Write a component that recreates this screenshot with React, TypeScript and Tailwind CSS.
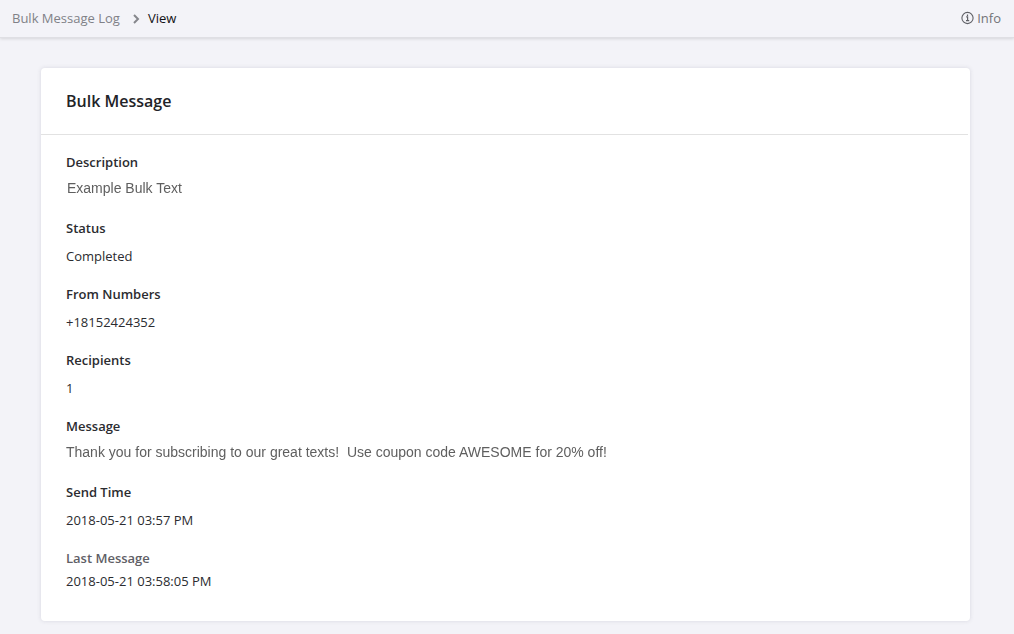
import React from "react";

const openSans = "font-['Open_Sans',sans-serif]";

function Label({ children, muted }: { children: React.ReactNode; muted?: boolean }) {
  return (
    <div className={`text-[13px] leading-[18px] font-semibold ${muted ? "text-[#5f6066]" : "text-[#2b2c30]"}`}>
      {children}
    </div>
  );
}

function Value({ children }: { children: React.ReactNode }) {
  return <div className="mt-[10px] text-[13px] leading-[18px] text-[#2b2c30]">{children}</div>;
}

// these two values are soft in the reference, like pasted-in text
function SoftText({ children, className = "" }: { children: React.ReactNode; className?: string }) {
  return (
    <div
      className={`mt-[8px] font-['Liberation_Sans',sans-serif] text-[14px] leading-[18px] text-[#5f5f5f] whitespace-pre blur-[0.4px] ${className}`}
    >
      {children}
    </div>
  );
}

export default function App() {
  return (
    <div className={`h-[634px] w-[1014px] overflow-hidden bg-[#f3f3f8] ${openSans}`}>
      <div className="flex h-[38px] items-center justify-between border-b border-[#dfdfe4] pl-3 pr-[13px] shadow-[0_1px_3px_rgba(0,0,0,0.12)]">
        <div className="flex items-center text-[13px]">
          <span className="text-[#808187]">Bulk Message Log</span>
          <svg className="ml-[12px] mr-[8px]" width="8" height="10" viewBox="0 0 8 10" fill="none">
            <path d="M2 1L6 5L2 9" stroke="#85868c" strokeWidth="2" />
          </svg>
          <span className="text-[#111114]">View</span>
        </div>
        <div className="flex items-center text-[13px] text-[#727379]">
          <svg className="mr-[2px]" width="15" height="15" viewBox="0 0 15 15" fill="none">
            <circle cx="7.5" cy="7" r="5.6" stroke="#5f6066" strokeWidth="1.1" />
            <path d="M6.2 5.9H7.6V9.6M6 9.6H9.2M7.5 3.4V4.9" stroke="#5f6066" strokeWidth="1.2" />
          </svg>
          Info
        </div>
      </div>

      <div className="ml-[41px] mt-[30px] h-[553px] w-[929px] rounded-[4px] bg-white shadow-[0_0_4px_rgba(60,60,90,0.15)]">
        <div className="mr-[2px] flex h-[67px] items-center border-b border-[#e2e2e2] pl-[25px]">
          <h1 className="text-[16px] font-semibold text-[#222327]">Bulk Message</h1>
        </div>
        <div className="pl-[25px] pt-[18px]">
          <Label>Description</Label>
          <SoftText className="ml-px">Example Bulk Text</SoftText>
          <div className="mt-[22px]">
            <Label>Status</Label>
            <Value>Completed</Value>
          </div>
          <div className="mt-[20px]">
            <Label>From Numbers</Label>
            <Value>+18152424352</Value>
          </div>
          <div className="mt-[20px]">
            <Label>Recipients</Label>
            <Value>1</Value>
          </div>
          <div className="mt-[20px]">
            <Label>Message</Label>
            <SoftText>Thank you for subscribing to our great texts!  Use coupon code AWESOME for 20% off!</SoftText>
          </div>
          <div className="mt-[22px]">
            <Label>Send Time</Label>
            <Value>2018-05-21 03:57 PM</Value>
          </div>
          <div className="mt-[20px]">
            <Label muted>Last Message</Label>
            <div className="mt-[5px] text-[13px] leading-[18px] text-[#2b2c30]">2018-05-21 03:58:05 PM</div>
          </div>
        </div>
      </div>
    </div>
  );
}
